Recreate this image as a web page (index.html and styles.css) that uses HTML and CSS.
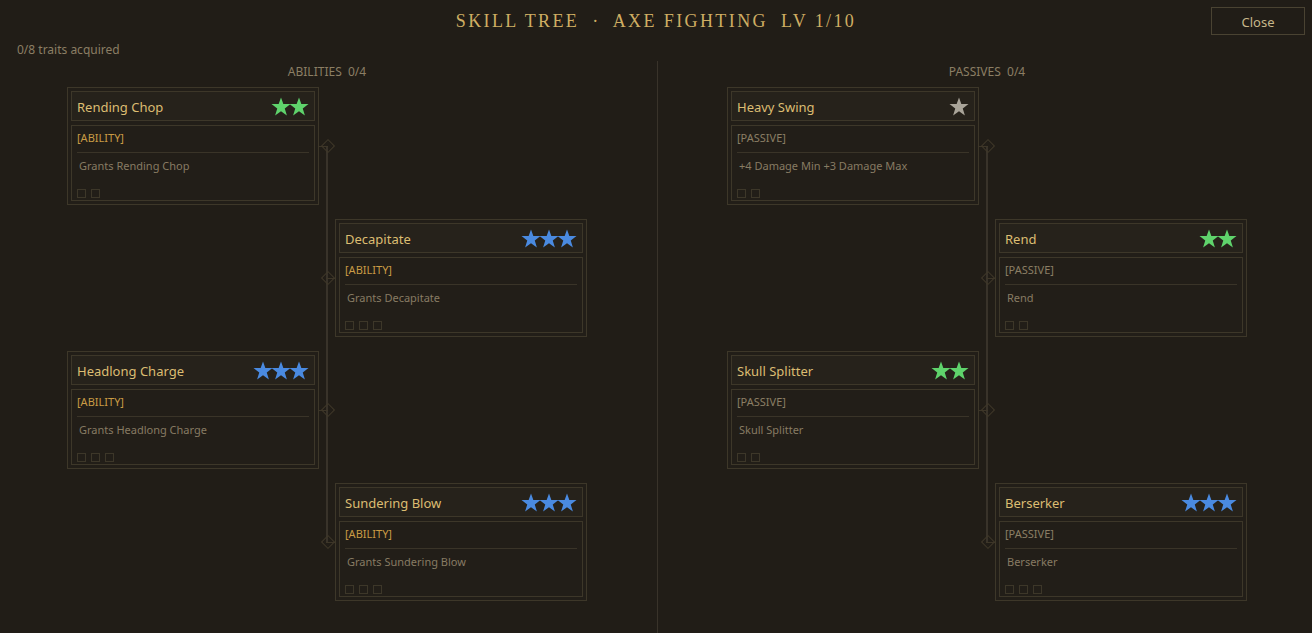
FILE: index.html
```html
<!DOCTYPE html>
<html lang="en">
  <head>
    <meta charset="UTF-8" />
    <meta name="viewport" content="width=device-width, initial-scale=1.0" />
    <title>Skill Tree - Axe Fighting</title>
    <link rel="stylesheet" href="styles.css">
  </head>

  <body>
    <svg width="0" height="0" style="position: absolute">
      <symbol id="star" viewBox="0 0 20 19">
        <path d="M10 0.5l2.35 6.6h7.15l-5.75 4.3 2.15 7.1L10 14.2l-5.9 4.3 2.15-7.1L0.5 7.1h7.15z" />
      </symbol>
    </svg>

    <div class="top">
      <div></div>
      <h1 class="title">
        Skill Tree<span class="sep">·</span>Axe Fighting<span class="lv">Lv 1/10</span>
      </h1>
      <button class="close-btn">Close</button>
    </div>
    <div class="acquired">0/8 traits acquired</div>

    <div class="main">
      <div class="col col-left">
        <div class="col-inner">
          <div class="col-label">ABILITIES&nbsp;&nbsp;0/4</div>
          <div class="tree">
            <div class="spine"></div>

            <div class="card r1 left">
              <div class="card-head">
                <span class="card-name">Rending Chop</span>
                <span class="stars green">
                  <svg><use href="#star" /></svg><svg><use href="#star" /></svg>
                </span>
              </div>
              <div class="card-body">
                <div class="card-type ability">[ABILITY]</div>
                <div class="card-desc">Grants Rending Chop</div>
                <div class="slots"><i></i><i></i></div>
              </div>
            </div>
            <div class="node r1 from-left"><span class="diamond"></span></div>

            <div class="card r2 right">
              <div class="card-head">
                <span class="card-name">Decapitate</span>
                <span class="stars blue">
                  <svg><use href="#star" /></svg><svg><use href="#star" /></svg><svg><use href="#star" /></svg>
                </span>
              </div>
              <div class="card-body">
                <div class="card-type ability">[ABILITY]</div>
                <div class="card-desc">Grants Decapitate</div>
                <div class="slots"><i></i><i></i><i></i></div>
              </div>
            </div>
            <div class="node r2 from-right"><span class="diamond"></span></div>

            <div class="card r3 left">
              <div class="card-head">
                <span class="card-name">Headlong Charge</span>
                <span class="stars blue">
                  <svg><use href="#star" /></svg><svg><use href="#star" /></svg><svg><use href="#star" /></svg>
                </span>
              </div>
              <div class="card-body">
                <div class="card-type ability">[ABILITY]</div>
                <div class="card-desc">Grants Headlong Charge</div>
                <div class="slots"><i></i><i></i><i></i></div>
              </div>
            </div>
            <div class="node r3 from-left"><span class="diamond"></span></div>

            <div class="card r4 right">
              <div class="card-head">
                <span class="card-name">Sundering Blow</span>
                <span class="stars blue">
                  <svg><use href="#star" /></svg><svg><use href="#star" /></svg><svg><use href="#star" /></svg>
                </span>
              </div>
              <div class="card-body">
                <div class="card-type ability">[ABILITY]</div>
                <div class="card-desc">Grants Sundering Blow</div>
                <div class="slots"><i></i><i></i><i></i></div>
              </div>
            </div>
            <div class="node r4 from-right"><span class="diamond"></span></div>
          </div>
        </div>
      </div>

      <div class="col col-right">
        <div class="col-inner">
          <div class="col-label">PASSIVES&nbsp;&nbsp;0/4</div>
          <div class="tree">
            <div class="spine"></div>

            <div class="card r1 left">
              <div class="card-head">
                <span class="card-name">Heavy Swing</span>
                <span class="stars grey">
                  <svg><use href="#star" /></svg>
                </span>
              </div>
              <div class="card-body">
                <div class="card-type passive">[PASSIVE]</div>
                <div class="card-desc">+4 Damage Min +3 Damage Max</div>
                <div class="slots"><i></i><i></i></div>
              </div>
            </div>
            <div class="node r1 from-left"><span class="diamond"></span></div>

            <div class="card r2 right">
              <div class="card-head">
                <span class="card-name">Rend</span>
                <span class="stars green">
                  <svg><use href="#star" /></svg><svg><use href="#star" /></svg>
                </span>
              </div>
              <div class="card-body">
                <div class="card-type passive">[PASSIVE]</div>
                <div class="card-desc">Rend</div>
                <div class="slots"><i></i><i></i></div>
              </div>
            </div>
            <div class="node r2 from-right"><span class="diamond"></span></div>

            <div class="card r3 left">
              <div class="card-head">
                <span class="card-name">Skull Splitter</span>
                <span class="stars green">
                  <svg><use href="#star" /></svg><svg><use href="#star" /></svg>
                </span>
              </div>
              <div class="card-body">
                <div class="card-type passive">[PASSIVE]</div>
                <div class="card-desc">Skull Splitter</div>
                <div class="slots"><i></i><i></i></div>
              </div>
            </div>
            <div class="node r3 from-left"><span class="diamond"></span></div>

            <div class="card r4 right">
              <div class="card-head">
                <span class="card-name">Berserker</span>
                <span class="stars blue">
                  <svg><use href="#star" /></svg><svg><use href="#star" /></svg><svg><use href="#star" /></svg>
                </span>
              </div>
              <div class="card-body">
                <div class="card-type passive">[PASSIVE]</div>
                <div class="card-desc">Berserker</div>
                <div class="slots"><i></i><i></i><i></i></div>
              </div>
            </div>
            <div class="node r4 from-right"><span class="diamond"></span></div>
          </div>
        </div>
      </div>
    </div>
  </body>
</html>
```

FILE: styles.css
```css
html,
body {
  height: 100%;
}
body {
  margin: 0;
  background: #211d17;
  color: #8b7e64;
  font-family: "Noto Sans", "Open Sans", sans-serif;
  overflow: hidden;
}

.top {
  display: grid;
  grid-template-columns: 1fr auto 1fr;
  align-items: center;
  padding: 7px 7px 0;
  height: 28px;
}
.title {
  margin: 1px 0 0;
  font-family: "Liberation Serif", "DejaVu Serif", serif;
  font-weight: normal;
  font-size: 18px;
  letter-spacing: 2.4px;
  text-transform: uppercase;
  color: #cfae63;
  white-space: nowrap;
}
.title .sep {
  margin: 0 12px 0 13px;
}
.title .lv {
  margin-left: 13px;
}
.close-btn {
  justify-self: end;
  width: 94px;
  height: 28px;
  padding-top: 2px;
  background: transparent;
  border: 1px solid #4a4332;
  color: #c7b78a;
  font-family: "Noto Sans", sans-serif;
  font-size: 13px;
  cursor: pointer;
}

.acquired {
  margin-top: 7px;
  padding-left: 17px;
  font-size: 12px;
  line-height: 16px;
}

.main {
  display: grid;
  grid-template-columns: 658px 1fr;
  margin-top: 3px;
  height: 573px;
}
.col {
  padding-top: 3px;
}
.col-left {
  border-right: 1px solid #39332a;
  padding-left: 67px;
}
.col-right {
  padding-left: 69px;
}
.col-inner {
  width: 520px;
}
.col-label {
  text-align: center;
  font-size: 12px;
  line-height: 16px;
  margin-bottom: 7px;
}

.tree {
  display: grid;
  grid-template-columns: 252px 16px 252px;
  grid-template-rows: repeat(4, 118px);
  row-gap: 14px;
}
.spine {
  grid-column: 2;
  grid-row: 1 / -1;
  justify-self: center;
  width: 2px;
  margin: 59px 0;
  background: #39332a;
}
.r1 { grid-row: 1; }
.r2 { grid-row: 2; }
.r3 { grid-row: 3; }
.r4 { grid-row: 4; }
.card.left { grid-column: 1; }
.card.right { grid-column: 3; }

.node {
  grid-column: 2;
  position: relative;
  display: flex;
  align-items: center;
  justify-content: center;
}
.node:before {
  content: "";
  position: absolute;
  top: 59px;
  height: 1px;
  width: 9px;
  background: #3d3628;
}
.from-left:before { left: 0; }
.from-right:before { right: 0; }
.diamond {
  width: 8px;
  height: 8px;
  margin-left: 1px;
  border: 1px solid #3f3829;
  transform: rotate(45deg);
}

.card {
  box-sizing: border-box;
  border: 1px solid #3d3729;
  padding: 3px;
  display: flex;
  flex-direction: column;
  gap: 4px;
  background: #221e18;
}
.card-head {
  box-sizing: border-box;
  height: 30px;
  border: 1px solid #3d3729;
  background: #26221b;
  display: flex;
  align-items: center;
  justify-content: space-between;
  padding: 1px 5px 0 5px;
}
.card-name {
  font-size: 13px;
  color: #dcbd72;
}
.stars {
  display: flex;
  margin-top: -1px;
}
.stars svg {
  width: 20px;
  height: 19px;
  margin-left: -2px;
}
.stars.green { fill: #5fd36c; }
.stars.blue { fill: #4a8ae0; }
.stars.grey { fill: #a9a499; }

.card-body {
  box-sizing: border-box;
  height: 76px;
  border: 1px solid #3d3729;
  padding: 4px 5px 2px;
  display: flex;
  flex-direction: column;
}
.card-type {
  font-size: 11px;
  line-height: 16px;
  padding-bottom: 6px;
  border-bottom: 1px solid #3a3428;
}
.card-type.ability { color: #c99b45; }
.card-type.passive { color: #8b7e65; }
.card-desc {
  margin-top: 5px;
  padding-left: 2px;
  font-size: 11px;
  line-height: 16px;
  color: #877b63;
}
.slots {
  margin-top: auto;
  display: flex;
  gap: 5px;
}
.slots i {
  width: 9px;
  height: 9px;
  box-sizing: border-box;
  border: 1px solid #3d3729;
}
```
